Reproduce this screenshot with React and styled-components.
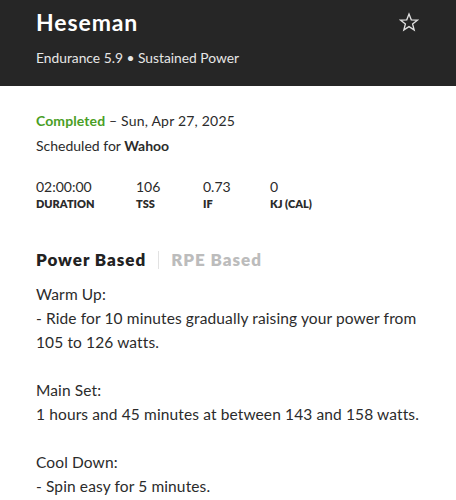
import styled, { createGlobalStyle } from "styled-components";

const GlobalStyle = createGlobalStyle`
  body {
    margin: 0;
    background: #fff;
    font-family: Lato, "Open Sans", sans-serif;
    color: #2b2b2b;
  }
`;

const Header = styled.header`
  background: #262626;
  color: #fff;
  height: 86px;
  box-sizing: border-box;
  padding: 8px 36px 0 36px;
  display: flex;
  justify-content: space-between;
  align-items: flex-start;
`;

const Title = styled.h1`
  margin: 0;
  font-size: 23px;
  font-weight: 700;
  letter-spacing: 0.9px;
  line-height: 29px;
`;

const Subtitle = styled.p`
  margin: 12px 0 0;
  font-size: 13.8px;
  color: #e6e6e6;
`;

const StarButton = styled.button`
  background: none;
  border: none;
  padding: 0;
  margin-top: 4px;
  margin-right: 1px;
  color: #e0e0e0;
  cursor: pointer;
`;

const Body = styled.main`
  padding: 26px 24px 0 36px;
`;

const StatusLine = styled.p`
  margin: 0;
  font-size: 14px;
  line-height: 18px;
  letter-spacing: 0.2px;
`;

const Completed = styled.span`
  color: #4a9e25;
  font-weight: 700;
  letter-spacing: 0.1px;
`;

const Scheduled = styled.p`
  margin: 7px 0 0;
  font-size: 14px;
  line-height: 18px;
  strong {
    font-weight: 700;
  }
`;

const Stats = styled.div`
  display: grid;
  grid-template-columns: 100px 67px 67px auto;
  margin-top: 24px;
`;

const StatValue = styled.div`
  font-size: 14px;
  line-height: 16px;
`;

const StatLabel = styled.div`
  font-size: 11px;
  font-weight: 800;
  text-transform: uppercase;
  line-height: 14px;
  margin-top: 2px;
`;

const Tabs = styled.div`
  display: flex;
  align-items: center;
  margin-top: 39px;
`;

const Tab = styled.button`
  background: none;
  border: none;
  padding: 0;
  font-family: inherit;
  font-size: 17px;
  font-weight: 800;
  letter-spacing: 0.95px;
  line-height: 20px;
  color: ${(p) => (p.$active ? "#222" : "#bcbcbc")};
`;

const TabDivider = styled.span`
  width: 1px;
  height: 18px;
  background: #e2e2e2;
  margin: 0 12px;
`;

const Description = styled.div`
  margin-top: 12px;
  font-size: 15.5px;
  letter-spacing: 0.12px;
  line-height: 24px;
  white-space: pre-wrap;
`;

const Star = () => (
  <svg width="20" height="20" viewBox="0 0 24 24" fill="none" stroke="currentColor" strokeWidth="1.6" strokeLinejoin="miter">
    <path d="M12 2.5l2.7 6.9 7.3.4-5.7 4.6 1.9 7.1L12 17.5l-6.2 4 1.9-7.1L2 9.8l7.3-.4z" />
  </svg>
);

const stats = [
  { value: "02:00:00", label: "Duration" },
  { value: "106", label: "TSS" },
  { value: "0.73", label: "IF" },
  { value: "0", label: "kJ (Cal)" },
];

const description = `Warm Up:
- Ride for 10 minutes gradually raising your power from 105 to 126 watts.

Main Set:
1 hours and 45 minutes at between 143 and 158 watts.

Cool Down:
- Spin easy for 5 minutes.`;

export default function App() {
  return (
    <>
      <GlobalStyle />
      <Header>
        <div>
          <Title>Heseman</Title>
          <Subtitle>Endurance 5.9 • Sustained Power</Subtitle>
        </div>
        <StarButton aria-label="Favorite">
          <Star />
        </StarButton>
      </Header>
      <Body>
        <StatusLine>
          <Completed>Completed</Completed> – Sun, Apr 27, 2025
        </StatusLine>
        <Scheduled>
          Scheduled for <strong>Wahoo</strong>
        </Scheduled>
        <Stats>
          {stats.map((s) => (
            <div key={s.label}>
              <StatValue>{s.value}</StatValue>
              <StatLabel>{s.label}</StatLabel>
            </div>
          ))}
        </Stats>
        <Tabs>
          <Tab $active>Power Based</Tab>
          <TabDivider />
          <Tab>RPE Based</Tab>
        </Tabs>
        <Description>{description}</Description>
      </Body>
    </>
  );
}
